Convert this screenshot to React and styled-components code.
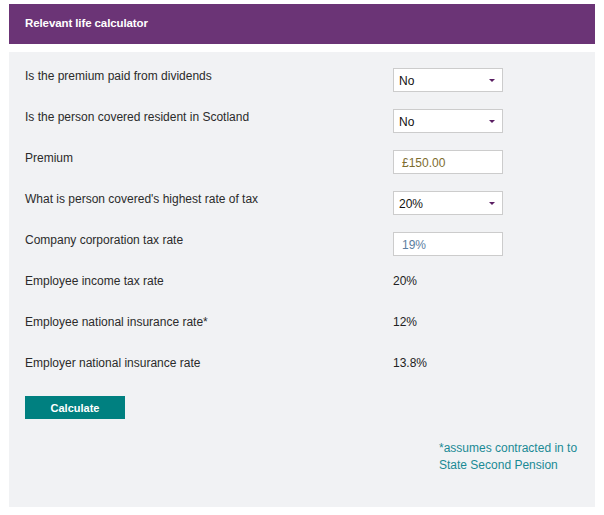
import React from 'react';
import styled, { createGlobalStyle } from 'styled-components';

const GlobalStyle = createGlobalStyle`
  body {
    margin: 0;
    background: #ffffff;
    font-family: "Liberation Sans", Arial, sans-serif;
  }
`;

const Page = styled.div`
  width: 586px;
  padding: 4px 0 0 9px;
`;

const Header = styled.div`
  height: 40px;
  background: #6b3476;
  display: flex;
  align-items: center;
  padding-left: 16px;
`;

const Title = styled.h3`
  margin: 0 0 2px 0;
  color: #ffffff;
  font-family: "Liberation Sans", Arial, sans-serif;
  font-weight: bold;
  font-size: 11.5px;
  letter-spacing: -0.1px;
`;

const Panel = styled.div`
  margin-top: 8px;
  height: 455px;
  box-sizing: border-box;
  background: #f1f2f4;
  padding: 16px 16px 0 16px;
`;

const Row = styled.div`
  display: flex;
  align-items: flex-start;
  height: 41px;
`;

const Label = styled.div`
  width: 368px;
  padding-top: 1px;
  font-size: 12px;
  line-height: 15px;
  color: #2b2b2b;
`;

const Value = styled.div`
  padding-top: 1px;
  font-size: 12px;
  line-height: 15px;
  color: #222222;
`;

const SelectBox = styled.div`
  position: relative;
  width: 110px;
  height: 24px;
  box-sizing: border-box;
  border: 1px solid #cccccc;
  background: #ffffff;
  font-size: 12px;
  color: #111111;
  display: flex;
  align-items: center;
  padding: 1px 0 0 5px;
`;

const Arrow = styled.span`
  position: absolute;
  right: 7px;
  top: 10px;
  width: 0;
  height: 0;
  border-left: 3px solid transparent;
  border-right: 3px solid transparent;
  border-top: 3px solid #5a1e63;
`;

const InputBox = styled.div`
  width: 110px;
  height: 24px;
  box-sizing: border-box;
  border: 1px solid #cccccc;
  background: #ffffff;
  font-size: 12px;
  color: ${props => props.color};
  display: flex;
  align-items: center;
  padding: 1px 0 0 8px;
`;

const Button = styled.button`
  width: 100px;
  height: 23px;
  border: none;
  background: #008080;
  color: #ffffff;
  font-family: "Liberation Sans", Arial, sans-serif;
  font-weight: bold;
  font-size: 11px;
  padding: 0;
  cursor: pointer;
`;

const Note = styled.p`
  margin: 21px 0 0 414px;
  width: 150px;
  font-size: 12px;
  line-height: 17px;
  color: #1a8a94;
`;

const Select = ({ value }) => (
  <SelectBox>
    {value}
    <Arrow />
  </SelectBox>
);

const rows = [
  { label: 'Is the premium paid from dividends', field: <Select value="No" /> },
  { label: 'Is the person covered resident in Scotland', field: <Select value="No" /> },
  { label: 'Premium', field: <InputBox color="#7d6c2e">£150.00</InputBox> },
  { label: "What is person covered's highest rate of tax", field: <Select value="20%" /> },
  { label: 'Company corporation tax rate', field: <InputBox color="#5b7ea0">19%</InputBox> },
  { label: 'Employee income tax rate', field: <Value>20%</Value> },
  { label: 'Employee national insurance rate*', field: <Value>12%</Value> },
  { label: 'Employer national insurance rate', field: <Value>13.8%</Value> },
];

const App = () => (
  <>
    <GlobalStyle />
    <Page>
      <Header>
        <Title>Relevant life calculator</Title>
      </Header>
      <Panel>
        {rows.map((row, index) => (
          <Row key={index}>
            <Label>{row.label}</Label>
            {row.field}
          </Row>
        ))}
        <Button>Calculate</Button>
        <Note>*assumes contracted in to State Second Pension</Note>
      </Panel>
    </Page>
  </>
);

export default App;
